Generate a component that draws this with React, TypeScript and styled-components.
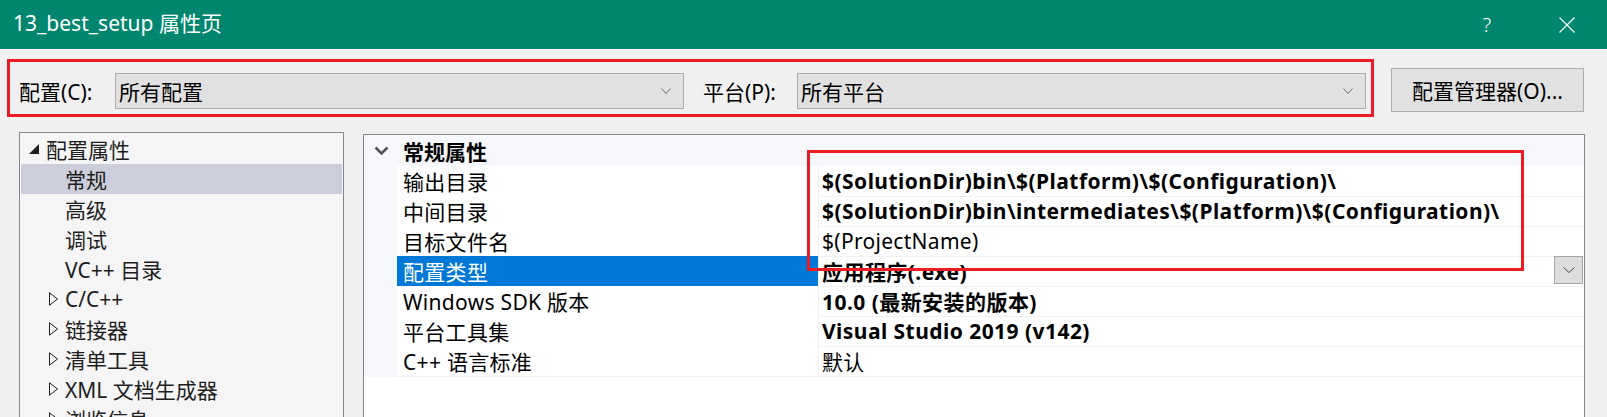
import React from "react";
import styled, { createGlobalStyle } from "styled-components";

const FONT = `"Noto Sans", "Noto Sans CJK SC", sans-serif`;

const GlobalStyle = createGlobalStyle`
  html, body { margin: 0; padding: 0; }
  body {
    background: #f0f0f0;
    font-family: ${FONT};
    width: 1607px;
    height: 417px;
    overflow: hidden;
  }
`;

const Window = styled.div`
  width: 1607px;
  height: 417px;
  display: flex;
  flex-direction: column;
  background: #f0f0f0;
  overflow: hidden;
  color: #000;
`;

const TitleBar = styled.div`
  flex: none;
  height: 49px;
  background: #00866f;
  display: flex;
  align-items: center;
  padding-left: 13px;
  color: #fff;
`;

const Title = styled.div`
  flex: 1;
  font-size: 21px;
  line-height: 1;
  padding-bottom: 2px;
`;

const CaptionButton = styled.div`
  width: 80px;
  height: 49px;
  display: flex;
  align-items: center;
  justify-content: center;
  font-size: 20px;
  font-weight: 300;
  color: #fff;
`;

const Toolbar = styled.div`
  flex: none;
  display: flex;
  align-items: flex-start;
  padding: 10px 0 0 7px;
  gap: 17px;
`;

const RedFrame = styled.div`
  box-sizing: border-box;
  width: 1367px;
  height: 58px;
  border: 3px solid #ec1c24;
  display: flex;
  align-items: flex-start;
  padding: 11px 5px 0 9px;
`;

const FieldLabel = styled.div<{ $width: number; $lead?: number }>`
  width: ${(p) => p.$width}px;
  margin-left: ${(p) => p.$lead ?? 0}px;
  height: 36px;
  display: flex;
  align-items: center;
  font-size: 21px;
  white-space: nowrap;
`;

const Combo = styled.div`
  box-sizing: border-box;
  width: 569px;
  height: 36px;
  background: #e1e1e1;
  border: 1px solid #adadad;
  display: flex;
  align-items: center;
  padding: 0 12px 0 3px;
  font-size: 21px;
`;

const ComboText = styled.span`
  flex: 1;
`;

const ManagerButton = styled.div`
  box-sizing: border-box;
  margin-top: 9px;
  width: 193px;
  height: 44px;
  background: #e1e1e1;
  border: 1px solid #adadad;
  display: flex;
  align-items: center;
  justify-content: center;
  font-size: 21px;
  white-space: nowrap;
`;

const Main = styled.div`
  flex: 1;
  min-height: 0;
  display: flex;
  align-items: stretch;
  padding: 15px 0 0 19px;
`;

const Tree = styled.div`
  box-sizing: border-box;
  flex: none;
  width: 325px;
  border: 1px solid #828790;
  border-bottom: none;
  background: #f5f5f5;
  padding: 1px 1px 0 1px;
  display: flex;
  flex-direction: column;
  overflow: hidden;
`;

const TreeRow = styled.div<{ $indent: number; $selected?: boolean }>`
  flex: none;
  height: 30px;
  display: flex;
  align-items: center;
  padding-left: ${(p) => p.$indent}px;
  background: ${(p) => (p.$selected ? "#cccedb" : "transparent")};
  font-size: 21px;
  white-space: nowrap;
  color: #1e1e1e;
`;

const Expander = styled.span`
  width: 17px;
  flex: none;
  display: flex;
  align-items: center;
`;

const Panel = styled.div`
  box-sizing: border-box;
  position: relative;
  flex: none;
  width: 1222px;
  margin: 2px 0 0 19px;
  border: 1px solid #828790;
  border-bottom: none;
  background: #fff;
  display: flex;
  flex-direction: column;
  overflow: hidden;
`;

const CategoryRow = styled.div`
  flex: none;
  height: 31px;
  display: flex;
  align-items: center;
  background: #f5f7fa;
  padding-left: 10px;
  font-size: 21px;
  font-weight: 700;
  gap: 14px;
`;

const PropRow = styled.div`
  flex: none;
  height: 30px;
  display: grid;
  grid-template-columns: 33px 422px 1fr;
`;

const Gutter = styled.div`
  background: #f5f7fa;
`;

const LabelCell = styled.div<{ $selected?: boolean }>`
  box-sizing: border-box;
  display: flex;
  align-items: center;
  padding-left: 6px;
  border-right: 1px solid #f0f0f0;
  border-bottom: 1px solid #f0f0f0;
  background: ${(p) => (p.$selected ? "#0078d7" : "#fff")};
  color: ${(p) => (p.$selected ? "#fff" : "#000")};
  font-size: 21px;
  letter-spacing: 0.3px;
  white-space: nowrap;
`;

const ValueCell = styled.div<{ $bold?: boolean }>`
  box-sizing: border-box;
  display: flex;
  align-items: center;
  padding-left: 3px;
  border-bottom: 1px solid #f0f0f0;
  font-size: 21px;
  font-weight: ${(p) => (p.$bold ? 700 : 400)};
  letter-spacing: ${(p) => (p.$bold ? 0.45 : 0.3)}px;
  white-space: nowrap;
  min-width: 0;
`;

const ValueText = styled.span`
  flex: 1;
`;

const CellDrop = styled.div`
  box-sizing: border-box;
  align-self: flex-start;
  width: 29px;
  height: 28px;
  margin-right: 1px;
  background: #dddddd;
  border: 1px solid #a5a5a5;
  display: flex;
  align-items: center;
  justify-content: center;
`;

const Annotation = styled.div`
  position: absolute;
  box-sizing: border-box;
  left: 443px;
  top: 15px;
  width: 717px;
  height: 121px;
  border: 3px solid #ec1c24;
  pointer-events: none;
`;

const SmallChevron = ({ color = "#6d6d6d", w = 10 }: { color?: string; w?: number }) => (
  <svg width={w} height={6} viewBox={`0 0 ${w} 6`}>
    <polyline
      points={`0.5,0.5 ${w / 2},5.5 ${w - 0.5},0.5`}
      fill="none"
      stroke={color}
      strokeWidth={1}
    />
  </svg>
);

const RootGlyph = () => (
  <svg width={10} height={10} viewBox="0 0 10 10">
    <polygon points="10,0 10,10 0,10" fill="#1e1e1e" />
  </svg>
);

const CollapsedGlyph = () => (
  <svg width={10} height={14} viewBox="0 0 10 14" style={{ marginLeft: 1 }}>
    <polygon points="0.5,0.8 8.5,7 0.5,13.2" fill="none" stroke="#1e1e1e" strokeWidth={1} />
  </svg>
);

const CategoryChevron = () => (
  <svg width={15} height={10} viewBox="0 0 15 10">
    <polyline points="1.5,1.5 7.5,7.5 13.5,1.5" fill="none" stroke="#555" strokeWidth={2.6} />
  </svg>
);

const CloseIcon = () => (
  <svg width={16} height={16} viewBox="0 0 16 16">
    <path d="M0.5 0.5 L15.5 15.5 M15.5 0.5 L0.5 15.5" stroke="#fff" strokeWidth={1.2} fill="none" />
  </svg>
);

type TreeItem = { label: string; level: 0 | 1; kind: "root" | "leaf" | "collapsed"; selected?: boolean };

const treeItems: TreeItem[] = [
  { label: "配置属性", level: 0, kind: "root" },
  { label: "常规", level: 1, kind: "leaf", selected: true },
  { label: "高级", level: 1, kind: "leaf" },
  { label: "调试", level: 1, kind: "leaf" },
  { label: "VC++ 目录", level: 1, kind: "leaf" },
  { label: "C/C++", level: 1, kind: "collapsed" },
  { label: "链接器", level: 1, kind: "collapsed" },
  { label: "清单工具", level: 1, kind: "collapsed" },
  { label: "XML 文档生成器", level: 1, kind: "collapsed" },
  { label: "浏览信息", level: 1, kind: "collapsed" },
  { label: "生成事件", level: 1, kind: "collapsed" },
];

type Prop = { label: string; value: string; bold?: boolean; selected?: boolean; drop?: boolean };

const props: Prop[] = [
  { label: "输出目录", value: "$(SolutionDir)bin\\$(Platform)\\$(Configuration)\\", bold: true },
  { label: "中间目录", value: "$(SolutionDir)bin\\intermediates\\$(Platform)\\$(Configuration)\\", bold: true },
  { label: "目标文件名", value: "$(ProjectName)" },
  { label: "配置类型", value: "应用程序(.exe)", bold: true, selected: true, drop: true },
  { label: "Windows SDK 版本", value: "10.0 (最新安装的版本)", bold: true },
  { label: "平台工具集", value: "Visual Studio 2019 (v142)", bold: true },
  { label: "C++ 语言标准", value: "默认" },
];

export default function App() {
  return (
    <>
      <GlobalStyle />
      <Window>
        <TitleBar>
          <Title>13_best_setup 属性页</Title>
          <CaptionButton>?</CaptionButton>
          <CaptionButton>
            <CloseIcon />
          </CaptionButton>
        </TitleBar>

        <Toolbar>
          <RedFrame>
            <FieldLabel $width={96}>配置(C):</FieldLabel>
            <Combo>
              <ComboText>所有配置</ComboText>
              <SmallChevron />
            </Combo>
            <FieldLabel $width={94} $lead={19}>平台(P):</FieldLabel>
            <Combo>
              <ComboText>所有平台</ComboText>
              <SmallChevron />
            </Combo>
          </RedFrame>
          <ManagerButton>配置管理器(O)...</ManagerButton>
        </Toolbar>

        <Main>
          <Tree>
            {treeItems.map((it) => (
              <TreeRow key={it.label} $indent={it.level === 0 ? 8 : 27} $selected={it.selected}>
                <Expander>
                  {it.kind === "root" && <RootGlyph />}
                  {it.kind === "collapsed" && <CollapsedGlyph />}
                </Expander>
                {it.label}
              </TreeRow>
            ))}
          </Tree>

          <Panel>
            <CategoryRow>
              <CategoryChevron />
              常规属性
            </CategoryRow>
            {props.map((p) => (
              <PropRow key={p.label}>
                <Gutter />
                <LabelCell $selected={p.selected}>{p.label}</LabelCell>
                <ValueCell $bold={p.bold}>
                  <ValueText>{p.value}</ValueText>
                  {p.drop && (
                    <CellDrop>
                      <SmallChevron color="#444" w={12} />
                    </CellDrop>
                  )}
                </ValueCell>
              </PropRow>
            ))}
            <Annotation />
          </Panel>
        </Main>
      </Window>
    </>
  );
}
